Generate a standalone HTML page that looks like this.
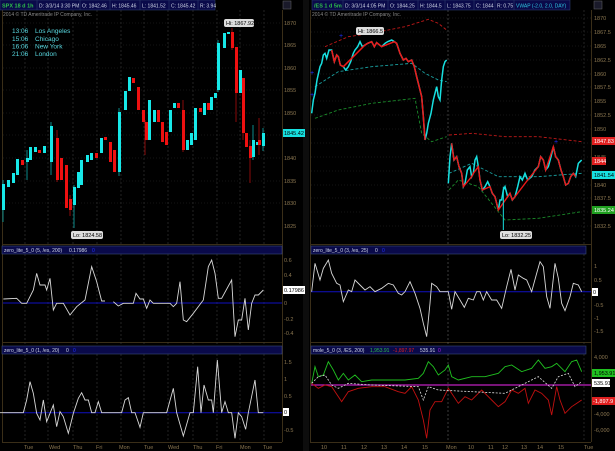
<!DOCTYPE html>
<html><head><meta charset="utf-8"><style>
html,body{margin:0;padding:0;background:#000;width:615px;height:451px;overflow:hidden}
svg{display:block;font-family:"Liberation Sans",sans-serif}
.ax{fill:#8a7650;font-size:5.5px}
.hd{fill:#cfd6e6;font-size:5px}
.l{fill:none;vector-effect:non-scaling-stroke}
</style></head><body>
<svg width="615" height="451" viewBox="0 0 615 451" xmlns="http://www.w3.org/2000/svg">
<rect width="615" height="451" fill="#000"/>
<rect x="303" y="0" width="6" height="451" fill="#0d0d0d"/>
<g stroke="#3a2e18" stroke-width="1" fill="none">
<line x1="282.5" y1="10" x2="282.5" y2="442"/>
<line x1="2.5" y1="10" x2="2.5" y2="442"/>
<line x1="591.5" y1="10" x2="591.5" y2="442"/>
<line x1="310.5" y1="10" x2="310.5" y2="442"/>
<line x1="2" y1="244.5" x2="282" y2="244.5"/><line x1="2" y1="342.5" x2="282" y2="342.5"/>
<line x1="310" y1="244.5" x2="591" y2="244.5"/><line x1="310" y1="342.5" x2="591" y2="342.5"/>
<line x1="2" y1="442.5" x2="282" y2="442.5"/><line x1="310" y1="442.5" x2="591" y2="442.5"/>
</g>
<g stroke="#3a3a3a" stroke-width="0.6" stroke-dasharray="2,2">
<line x1="25" y1="10" x2="25" y2="442"/><line x1="48" y1="10" x2="48" y2="442"/><line x1="73" y1="10" x2="73" y2="442"/><line x1="97" y1="10" x2="97" y2="442"/><line x1="121" y1="10" x2="121" y2="442"/><line x1="144" y1="10" x2="144" y2="442"/><line x1="168" y1="10" x2="168" y2="442"/><line x1="193" y1="10" x2="193" y2="442"/><line x1="217" y1="10" x2="217" y2="442"/><line x1="240" y1="10" x2="240" y2="442"/><line x1="264" y1="10" x2="264" y2="442"/>
<line x1="448" y1="10" x2="448" y2="442" stroke="#666"/><line x1="584" y1="10" x2="584" y2="442"/>
</g>
<g stroke="#262626" stroke-width="0.5" stroke-dasharray="1,2">
<line x1="3" y1="23" x2="282" y2="23"/><line x1="3" y1="45" x2="282" y2="45"/><line x1="3" y1="68" x2="282" y2="68"/><line x1="3" y1="90" x2="282" y2="90"/><line x1="3" y1="113" x2="282" y2="113"/><line x1="3" y1="135" x2="282" y2="135"/><line x1="3" y1="158" x2="282" y2="158"/><line x1="3" y1="181" x2="282" y2="181"/><line x1="3" y1="203" x2="282" y2="203"/>
<line x1="311" y1="18" x2="591" y2="18"/><line x1="311" y1="32" x2="591" y2="32"/><line x1="311" y1="46" x2="591" y2="46"/><line x1="311" y1="60" x2="591" y2="60"/><line x1="311" y1="74" x2="591" y2="74"/><line x1="311" y1="87" x2="591" y2="87"/><line x1="311" y1="101" x2="591" y2="101"/><line x1="311" y1="115" x2="591" y2="115"/><line x1="311" y1="129" x2="591" y2="129"/><line x1="311" y1="143" x2="591" y2="143"/><line x1="311" y1="157" x2="591" y2="157"/><line x1="311" y1="171" x2="591" y2="171"/><line x1="311" y1="185" x2="591" y2="185"/><line x1="311" y1="198" x2="591" y2="198"/><line x1="311" y1="212" x2="591" y2="212"/><line x1="311" y1="226" x2="591" y2="226"/>
</g>
<rect x="0" y="0" width="215" height="10" fill="#0a0a4a" stroke="#2a3a6a" stroke-width="0.6"/>
<text x="2" y="7.5" font-size="5.5px" fill="#2ec04a" font-weight="bold">SPX 18 d 1h</text>
<g class="hd"><text x="39" y="7.3">D: 3/3/14 3:30 PM</text><text x="82" y="7.3">O: 1842.46</text><text x="112" y="7.3">H: 1845.46</text><text x="142" y="7.3">L: 1841.52</text><text x="171" y="7.3">C: 1845.42</text><text x="200" y="7.3">R: 3.94</text></g>
<g stroke="#2a3a6a" stroke-width="0.6"><line x1="37" y1="0" x2="37" y2="10"/><line x1="80" y1="0" x2="80" y2="10"/><line x1="110" y1="0" x2="110" y2="10"/><line x1="140" y1="0" x2="140" y2="10"/><line x1="169" y1="0" x2="169" y2="10"/><line x1="198" y1="0" x2="198" y2="10"/></g>
<rect x="312" y="0" width="258" height="10" fill="#0a0a4a" stroke="#2a3a6a" stroke-width="0.6"/>
<text x="314" y="7.5" font-size="5.5px" fill="#2ec04a" font-weight="bold">/ES 1 d 5m</text>
<g class="hd"><text x="345" y="7.3">D: 3/3/14 4:05 PM</text><text x="390" y="7.3">O: 1844.25</text><text x="420" y="7.3">H: 1844.5</text><text x="447" y="7.3">L: 1843.75</text><text x="476" y="7.3">C: 1844</text><text x="497" y="7.3">R: 0.75</text><text x="516" y="7.3" fill="#2ec8e0">VWAP (-2.0, 2.0, DAY)</text></g>
<g stroke="#2a3a6a" stroke-width="0.6"><line x1="343" y1="0" x2="343" y2="10"/><line x1="388" y1="0" x2="388" y2="10"/><line x1="418" y1="0" x2="418" y2="10"/><line x1="445" y1="0" x2="445" y2="10"/><line x1="474" y1="0" x2="474" y2="10"/><line x1="495" y1="0" x2="495" y2="10"/><line x1="514" y1="0" x2="514" y2="10"/></g>
<rect x="283" y="1" width="8" height="8" fill="#1a1a2a" stroke="#666" stroke-width="0.5"/><rect x="594" y="1" width="8" height="8" fill="#1a1a2a" stroke="#666" stroke-width="0.5"/>
<text x="3" y="16" font-size="5px" fill="#888">2014 © TD Ameritrade IP Company, Inc.</text>
<text x="312" y="16" font-size="5px" fill="#888">2014 © TD Ameritrade IP Company, Inc.</text>
<g font-size="6.5px" fill="#58d8e0"><text x="12" y="33">13:06</text><text x="35" y="33">Los Angeles</text><text x="12" y="41">15:06</text><text x="35" y="41">Chicago</text><text x="12" y="48.5">16:06</text><text x="35" y="48.5">New York</text><text x="12" y="56">21:06</text><text x="35" y="56">London</text></g>
<g>
<g stroke-width="1" stroke="#0a8a8a"><line x1="3" y1="180" x2="3" y2="222"/><line x1="51" y1="122" x2="51" y2="175"/><line x1="74" y1="185" x2="74" y2="228"/><line x1="119" y1="108" x2="119" y2="176"/><line x1="218" y1="40" x2="218" y2="92"/><line x1="253" y1="125" x2="253" y2="160"/><line x1="263" y1="128" x2="263" y2="151"/><line x1="27" y1="150" x2="27" y2="180"/></g>
<g stroke-width="1" stroke="#8a0a0a"><line x1="57" y1="130" x2="57" y2="182"/><line x1="70" y1="195" x2="70" y2="216"/><line x1="145" y1="120" x2="145" y2="155"/><line x1="183" y1="100" x2="183" y2="152"/><line x1="236" y1="65" x2="236" y2="122"/><line x1="243" y1="80" x2="243" y2="140"/><line x1="250" y1="140" x2="250" y2="183"/><line x1="259" y1="118" x2="259" y2="155"/><line x1="232" y1="28" x2="232" y2="50"/></g>
<g fill="#17e8e8">
<rect x="2" y="184" width="3" height="26"/><rect x="7" y="180" width="3" height="7"/><rect x="12" y="173" width="3" height="10"/><rect x="16" y="159" width="3" height="16"/><rect x="26" y="158" width="3" height="4"/><rect x="29" y="147" width="3" height="13"/><rect x="34" y="147" width="3" height="5"/><rect x="43" y="146" width="3" height="7"/><rect x="50" y="126" width="3" height="36"/><rect x="73" y="187" width="3" height="18"/><rect x="77" y="172" width="3" height="16"/><rect x="80" y="160" width="3" height="25"/><rect x="86" y="155" width="3" height="7"/><rect x="90" y="153" width="3" height="7"/><rect x="100" y="138" width="3" height="15"/><rect x="118" y="112" width="3" height="60"/><rect x="124" y="91" width="3" height="19"/><rect x="128" y="77" width="3" height="14"/><rect x="148" y="100" width="3" height="40"/><rect x="153" y="110" width="3" height="12"/><rect x="169" y="110" width="3" height="22"/><rect x="173" y="103" width="3" height="5"/><rect x="186" y="140" width="3" height="10"/><rect x="190" y="133" width="3" height="12"/><rect x="194" y="108" width="3" height="32"/><rect x="203" y="103" width="3" height="12"/><rect x="210" y="97" width="3" height="13"/><rect x="214" y="93" width="3" height="5"/><rect x="217" y="43" width="3" height="47"/><rect x="223" y="33" width="3" height="15"/><rect x="227" y="32" width="3" height="2"/><rect x="239" y="70" width="3" height="23"/><rect x="252" y="140" width="3" height="17"/><rect x="256" y="142" width="3" height="3"/><rect x="262" y="133" width="3" height="13"/>
</g>
<g fill="#ee1010">
<rect x="21" y="160" width="3" height="5"/><rect x="38" y="150" width="3" height="3"/><rect x="56" y="138" width="3" height="42"/><rect x="60" y="158" width="3" height="22"/><rect x="65" y="165" width="3" height="43"/><rect x="69" y="199" width="3" height="11"/><rect x="95" y="153" width="3" height="5"/><rect x="104" y="137" width="3" height="3"/><rect x="109" y="142" width="3" height="20"/><rect x="113" y="150" width="3" height="22"/><rect x="132" y="78" width="3" height="5"/><rect x="137" y="87" width="3" height="23"/><rect x="142" y="110" width="3" height="12"/><rect x="145" y="122" width="3" height="18"/><rect x="157" y="110" width="3" height="12"/><rect x="161" y="122" width="3" height="20"/><rect x="165" y="132" width="3" height="13"/><rect x="177" y="103" width="3" height="5"/><rect x="182" y="110" width="3" height="40"/><rect x="199" y="108" width="3" height="4"/><rect x="207" y="103" width="3" height="7"/><rect x="231" y="32" width="3" height="16"/><rect x="235" y="47" width="3" height="46"/><rect x="242" y="78" width="3" height="55"/><rect x="245" y="133" width="3" height="14"/><rect x="249" y="146" width="3" height="12"/><rect x="258" y="140" width="3" height="5"/>
</g>
</g>
<rect x="224" y="19" width="30" height="8" rx="2" fill="#ddd"/><text x="226" y="25" font-size="5.5px" fill="#000">Hi: 1867.92</text>
<rect x="71" y="231" width="32" height="8" rx="2" fill="#ddd"/><text x="73" y="237" font-size="5.5px" fill="#000">Lo: 1824.58</text>
<g transform="translate(305,0) scale(0.33333)">
<polyline class="l" stroke="#c01818" stroke-width="0.9" stroke-dasharray="3,2" points="60,140 130,110 200,100 300,80 370,58 400,70 425,90"/>
<polyline class="l" stroke="#c01818" stroke-width="0.9" stroke-dasharray="3,2" points="432,405 500,400 600,410 700,410 830,425"/>
<polyline class="l" stroke="#1aa0a0" stroke-width="0.9" stroke-dasharray="3,2" points="30,260 100,215 200,200 320,190 360,220 400,240 425,245"/>
<polyline class="l" stroke="#1aa0a0" stroke-width="0.9" stroke-dasharray="3,2" points="432,520 500,490 580,530 700,530 830,520"/>
<polyline class="l" stroke="#1a8a2a" stroke-width="0.9" stroke-dasharray="3,2" points="30,355 100,330 200,310 330,295 350,400 380,425 425,410"/>
<polyline class="l" stroke="#1a8a2a" stroke-width="0.9" stroke-dasharray="3,2" points="432,570 460,540 520,560 600,660 700,655 830,635"/>
<polyline class="l" stroke="#17e0e0" stroke-width="1.5" points="20,340 25,300 30,280 36,240 45,200 50,190 55,165 60,160 65,175 72,150 80,150 88,185 95,165 100,170 106,195 115,200 122,210 130,200 137,185 145,160 150,150 158,140 165,125 172,140 180,135 188,130 200,125 208,140 215,128 230,140 240,130 248,125 260,120 268,125 275,130 285,160 295,180 303,175 310,185 320,180 328,200 335,230 340,250 350,290 355,350 360,420 365,400 370,370 378,340 385,300 390,280 395,260 400,290 405,300 410,240 415,200 420,185 425,180"/>
<polyline class="l" stroke="#ee1818" stroke-width="1.5" points="80,150 88,185 95,165 100,170 106,195 115,200 180,135 188,130 200,125 208,140 215,128 230,140 268,125 275,130 285,160 295,180 303,175 310,185 320,180 328,200 335,230 340,250 350,290 355,350 360,420"/>
<polyline class="l" stroke="#17e0e0" stroke-width="1.5" points="430,550 435,470 440,430 447,480 455,470 462,500 470,520 475,560 480,550 487,510 495,500 500,530 505,520 510,480 515,470 520,500 525,540 532,570 540,560 548,545 555,560 562,580 570,590 575,610 580,630 585,600 590,600 595,570 600,560 608,590 615,580 622,600 630,590 638,560 645,530 652,540 660,520 668,540 680,530 690,510 700,500 707,470 715,480 722,510 730,500 738,470 745,440 752,470 760,480 768,510 775,530 782,555 790,550 797,530 805,520 812,530 820,490 825,485 830,480"/>
<polyline class="l" stroke="#ee1818" stroke-width="1.4" points="440,430 447,480 455,470 462,500 470,520 475,560 500,530 505,520 520,500 525,540 532,570 555,560 562,580 570,590 575,610 580,630 608,590 615,580 622,600 630,590 668,540 700,500 707,470 715,480 722,510 745,440 752,470 760,480 768,510 775,530 782,555 790,550 797,530 805,520 812,530"/>
<line x1="595" y1="560" x2="595" y2="690" stroke="#17e0e0" stroke-width="1" vector-effect="non-scaling-stroke"/>
</g>
<text x="339" y="38" font-size="7px" fill="#2030ff">+</text><text x="310" y="75" font-size="7px" fill="#2030ff">+</text><text x="310" y="97" font-size="7px" fill="#2030ff">+</text><text x="554" y="144" font-size="7px" fill="#2030ff">+</text>
<rect x="356" y="27" width="28" height="8" rx="2" fill="#ddd"/><text x="358" y="33" font-size="5.5px" fill="#000">Hi: 1866.5</text>
<rect x="500" y="231" width="32" height="8" rx="2" fill="#ddd"/><text x="502" y="237" font-size="5.5px" fill="#000">Lo: 1832.25</text>
<g stroke="#3a4a7a" stroke-width="0.6">
<rect x="2" y="246" width="280" height="8" fill="#0a0a4a"/><rect x="2" y="346" width="280" height="8" fill="#0a0a4a"/>
<rect x="311" y="246" width="275" height="8" fill="#0a0a4a"/><rect x="311" y="346" width="275" height="8" fill="#0a0a4a"/>
</g>
<g font-size="5px" fill="#cfd6e6">
<text x="4" y="252">zero_lite_5_0 (5, /es, 200)</text><text x="69" y="252">0.17986</text><text x="92" y="252" fill="#2030ff">0</text>
<text x="4" y="352">zero_lite_5_0 (1, /es, 20)</text><text x="66" y="352">0</text><text x="73" y="352" fill="#2030ff">0</text>
<text x="313" y="252">zero_lite_5_0 (3, /es, 25)</text><text x="375" y="252">0</text><text x="382" y="252" fill="#2030ff">0</text>
<text x="313" y="352">mole_5_0 (3, /ES, 200)</text><text x="370" y="352" fill="#2ec04a">1,953.91</text><text x="393" y="352" fill="#e02020">-1,897.97</text><text x="420" y="352">535.91</text><text x="438" y="352" fill="#b020e0">0</text>
</g>
<line x1="3" y1="303" x2="282" y2="303" stroke="#1010c0" stroke-width="1"/>
<line x1="3" y1="412.7" x2="282" y2="412.7" stroke="#1010c0" stroke-width="1"/>
<line x1="311" y1="291.7" x2="591" y2="291.7" stroke="#1010c0" stroke-width="1"/>
<line x1="311" y1="385" x2="591" y2="385" stroke="#c020c0" stroke-width="1.2"/>
<g transform="translate(0,220) scale(0.33333)">
<polyline class="l" stroke="#d8d8d8" stroke-width="0.9" points="10,237 50,235 65,250 80,250 100,210 110,160 120,195 135,195 140,210 150,175 160,270 170,250 190,250 210,285 230,260 255,240 275,140 290,185 305,243 315,243"/>
<polyline class="l" stroke="#d8d8d8" stroke-width="0.9" points="340,245 355,258 370,250 400,250 408,220 420,237 430,237 440,265 450,240 460,250 510,250 520,260 530,250 540,185 550,300 560,305 580,280 610,240 625,140 635,120 645,160 655,235 665,235 695,180 705,350 715,300 725,300 735,235 745,330 755,250 765,225 775,225 790,210"/>
<polyline class="l" stroke="#d8d8d8" stroke-width="0.9" points="0,578 70,578 80,540 90,485 100,520 110,580 120,600 130,540 140,605 160,555 170,620 180,575 190,590 205,640 220,580 235,535 245,518 255,540 265,540 275,578 285,578 295,545 305,578 365,578 375,540 385,533 395,578 405,578 420,622 430,578 500,578 520,505 530,578 550,648 570,578 580,578 593,440 603,578 612,495 625,540 635,540 640,578 652,420 665,578 675,545 685,578 695,578 705,655 715,578 725,590 737,628 745,578 765,480 775,578 790,578"/>
</g>
<g transform="translate(305,220) scale(0.33333)">
<polyline class="l" stroke="#d8d8d8" stroke-width="0.9" points="20,215 30,130 45,180 55,145 70,120 80,160 95,190 105,195 115,245 130,210 140,215 150,180 165,195 180,210 195,200 210,215 230,205 250,190 265,195 280,220 290,225 300,215 315,185 330,220 345,265 355,310 365,350 375,250 380,190 395,200 405,215 430,215 440,268 450,215 465,240 478,262 490,235 505,240 515,215 525,215 535,240 545,215 560,240 575,240 590,265 605,200 618,148 630,210 640,165 655,175 665,180 680,215 695,160 705,125 715,140 725,230 735,265 750,130 760,175 770,250 780,272 795,230 805,190 820,195 830,215"/>
<polyline class="l" stroke="#20c020" stroke-width="0.9" points="20,490 30,440 40,470 55,465 70,425 85,450 100,480 115,460 130,480 150,465 170,485 200,480 230,480 260,480 300,480 340,475 355,460 370,425 385,440 400,465 420,450 430,435 440,470 460,480 500,470 540,470 580,460 600,440 620,435 650,455 680,445 700,420 720,445 740,440 755,430 780,455 800,425 815,420 830,455"/>
<polyline class="l" stroke="#c01010" stroke-width="0.9" points="20,490 40,505 60,495 80,500 110,545 130,515 160,505 200,500 240,500 280,515 300,520 320,500 340,540 355,600 365,655 375,570 390,545 410,545 430,505 460,550 480,530 500,540 530,510 560,540 580,560 600,545 620,510 640,520 660,505 670,550 690,510 710,520 730,540 740,585 755,500 765,540 780,580 800,560 815,550 830,540"/>
<polyline class="l" stroke="#e0e0e0" stroke-width="0.8" stroke-dasharray="2,1.5" points="20,490 40,470 60,465 80,495 100,505 130,490 200,495 340,500 355,540 370,500 400,510 600,520 700,470 740,505 760,470 790,460 810,500 830,485"/>
</g>
<g class="ax">
<text x="284" y="25">1870</text><text x="284" y="47">1865</text><text x="284" y="70">1860</text><text x="284" y="92">1855</text><text x="284" y="115">1850</text><text x="284" y="160">1840</text><text x="284" y="183">1835</text><text x="284" y="205">1830</text><text x="284" y="228">1825</text>
<text x="284" y="262">0.6</text><text x="284" y="277">0.4</text><text x="284" y="291">0.2</text><text x="284" y="305">0</text><text x="284" y="321">-0.2</text><text x="284" y="335">-0.4</text>
<text x="284" y="364">1.5</text><text x="284" y="381">1</text><text x="284" y="398">0.5</text><text x="284" y="432">-0.5</text>
<text x="594" y="20">1870</text><text x="594" y="34">1867.5</text><text x="594" y="48">1865</text><text x="594" y="62">1862.5</text><text x="594" y="76">1860</text><text x="594" y="89">1857.5</text><text x="594" y="103">1855</text><text x="594" y="117">1852.5</text><text x="594" y="131">1850</text><text x="594" y="159">1845</text><text x="594" y="187">1840</text><text x="594" y="200">1837.5</text><text x="594" y="228">1832.5</text>
<text x="594" y="268">1</text><text x="594" y="282">0.5</text><text x="594" y="307">-0.5</text><text x="594" y="320">-1</text><text x="594" y="333">-1.5</text>
<text x="594" y="359">4,000</text><text x="594" y="387">0</text><text x="594" y="416">-4,000</text><text x="594" y="432">-6,000</text>
</g>
<g font-size="5.5px">
<rect x="283" y="129" width="22" height="8" fill="#17e0e0"/><text x="284" y="135" fill="#000">1845.42</text>
<rect x="283" y="286" width="22" height="8" fill="#fff"/><text x="284" y="292" fill="#000">0.17986</text>
<rect x="283" y="408" width="6" height="8" fill="#fff"/><text x="284" y="414" fill="#000">0</text>
<rect x="592" y="137" width="23" height="8" fill="#e02020"/><text x="594" y="143" fill="#fff">1847.83</text>
<rect x="592" y="157" width="14" height="8" fill="#e02020"/><text x="594" y="163" fill="#fff">1844</text>
<rect x="592" y="171" width="23" height="8" fill="#17e0e0"/><text x="594" y="177" fill="#000">1841.54</text>
<rect x="592" y="206" width="23" height="8" fill="#20a020"/><text x="594" y="212" fill="#fff">1835.24</text>
<rect x="592" y="288" width="6" height="8" fill="#fff"/><text x="593" y="294" fill="#000">0</text>
<rect x="592" y="369" width="23" height="8" fill="#20c020"/><text x="594" y="375" fill="#000">1,953.91</text>
<rect x="592" y="379" width="18" height="8" fill="#fff"/><text x="594" y="385" fill="#000">535.91</text>
<rect x="592" y="397" width="23" height="8" fill="#e02020"/><text x="593" y="403" fill="#fff">-1,897.9</text>
</g>
<g class="ax" fill="#8a7650">
<text x="24" y="449">Tue</text><text x="49" y="449">Wed</text><text x="73" y="449">Thu</text><text x="96" y="449">Fri</text><text x="119" y="449">Mon</text><text x="144" y="449">Tue</text><text x="168" y="449">Wed</text><text x="193" y="449">Thu</text><text x="216" y="449">Fri</text><text x="240" y="449">Mon</text><text x="263" y="449">Tue</text>
<text x="321" y="449">10</text><text x="341" y="449">11</text><text x="361" y="449">12</text><text x="381" y="449">13</text><text x="401" y="449">14</text><text x="422" y="449">15</text><text x="446" y="449">Mon</text><text x="468" y="449">10</text><text x="488" y="449">11</text><text x="502" y="449">12</text><text x="521" y="449">13</text><text x="537" y="449">14</text><text x="558" y="449">15</text><text x="584" y="449">Tue</text>
</g>
</svg>
</body></html>
